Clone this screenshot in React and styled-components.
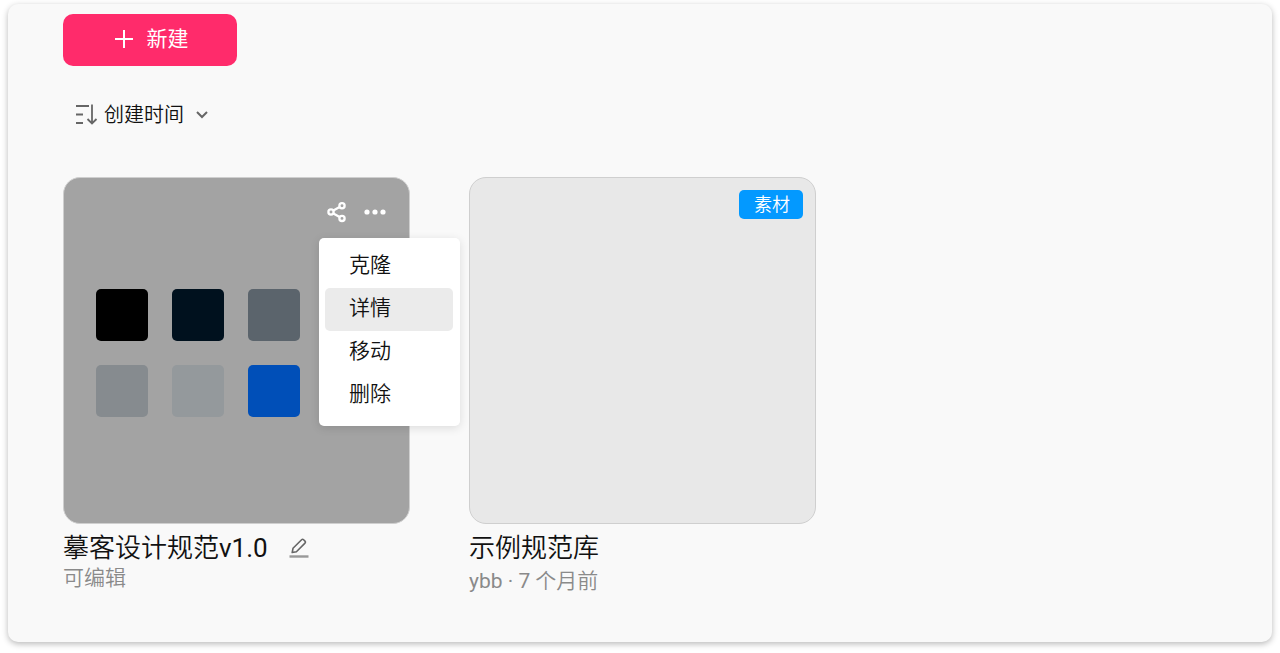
import styled, { createGlobalStyle } from "styled-components";
import { useState } from "react";

const GlobalStyle = createGlobalStyle`
  * {
    box-sizing: border-box;
  }

  body {
    margin: 0;
    background: #fff;
    color: #111;
    font-family: Roboto, "Noto Sans CJK SC", sans-serif;
    font-weight: 350;
  }

  button {
    font: inherit;
    color: inherit;
    border: none;
    padding: 0;
    background: none;
    cursor: pointer;
  }
`;

const Panel = styled.main`
  margin: 4px 8px 10px;
  padding: 10px 55px 46px;
  background: #f9f9f9;
  border-radius: 10px;
  box-shadow: 0 2px 6px rgba(0, 0, 0, 0.28);
`;

const CreateButton = styled.button`
  display: flex;
  align-items: center;
  justify-content: center;
  gap: 13px;
  width: 174px;
  height: 52px;
  padding: 0 0 2px 2px;
  border-radius: 10px;
  background: #ff2b6b;
  color: #fff;
  font-size: 21px;
  font-weight: 400;
  line-height: 30px;
`;

const SortButton = styled.button`
  display: flex;
  align-items: center;
  margin: 34px 0 0 12px;
  font-size: 20px;
  line-height: 30px;

  svg:first-child {
    margin-right: 6px;
  }

  svg:last-child {
    margin-left: 11px;
  }
`;

const Grid = styled.section`
  display: flex;
  flex-wrap: wrap;
  gap: 59px;
  margin-top: 47px;
`;

const Item = styled.article`
  width: 347px;
`;

const Cover = styled.div`
  position: relative;
  height: 347px;
  border: 1px solid #cfcfcf;
  border-radius: 17px;
  background: ${(props) => (props.$active ? "#a3a3a3" : "#e8e8e8")};
`;

const Swatches = styled.div`
  display: grid;
  grid-template-columns: repeat(3, 52px);
  gap: 24px;
  padding: 111px 0 0 32px;
`;

const Swatch = styled.div`
  height: 52px;
  border-radius: 5px;
  background: ${(props) => props.$color};
`;

const Actions = styled.div`
  position: absolute;
  top: 23px;
  right: 22px;
  display: flex;
  align-items: center;
  gap: 16px;
  color: #fff;
`;

const IconButton = styled.button`
  display: flex;
`;

const Menu = styled.ul`
  position: absolute;
  top: 60px;
  left: 255px;
  z-index: 1;
  width: 141px;
  margin: 0;
  padding: 7px 7px 9px 6px;
  list-style: none;
  background: #fff;
  border-radius: 5px;
  box-shadow: 0 2px 10px rgba(0, 0, 0, 0.12);
`;

const MenuItem = styled.button`
  display: block;
  width: 100%;
  height: 43px;
  padding: 0 0 4px 24px;
  border-radius: 5px;
  background: ${(props) => (props.$active ? "#ebebeb" : "none")};
  font-size: 21px;
  line-height: 30px;
  text-align: left;
`;

const Badge = styled.span`
  position: absolute;
  top: 12px;
  right: 12px;
  width: 64px;
  height: 29px;
  padding-left: 2px;
  border-radius: 5px;
  background: #0399ff;
  color: #fff;
  font-size: 18px;
  line-height: 29px;
  text-align: center;
`;

const TitleRow = styled.div`
  display: flex;
  align-items: center;
  gap: 21px;
  margin-top: 6px;
`;

const Title = styled.h2`
  margin: 0;
  font-size: 26px;
  font-weight: 350;
  line-height: 36px;
`;

const Meta = styled.p`
  margin: ${(props) => (props.$tight ? "-3px" : "0")} 0 0;
  color: #8a8a8a;
  font-size: 21px;
  line-height: 30px;
`;

const Latin = styled.span`
  font-weight: 400;
`;

const PlusIcon = () => (
  <svg width="20" height="20" viewBox="0 0 20 20" fill="none" stroke="currentColor" strokeWidth="2">
    <path d="M10 1v18M1 10h18" />
  </svg>
);

const SortIcon = () => (
  <svg width="23" height="22" viewBox="0 0 23 22" fill="none" stroke="#666" strokeWidth="1.8">
    <path d="M1 2h13M1 10.5h7M1 19h7M17 0.5v19M12.5 15l4.5 4.5 4.5-4.5" />
  </svg>
);

const ChevronIcon = () => (
  <svg width="14" height="10" viewBox="0 0 14 10" fill="none" stroke="#666" strokeWidth="2">
    <path d="M2 2l5 5 5-5" />
  </svg>
);

const ShareIcon = () => (
  <svg width="20" height="22" viewBox="0 0 20 22" fill="none" stroke="currentColor" strokeWidth="2.3">
    <circle cx="4" cy="11" r="2.6" />
    <circle cx="15" cy="4.8" r="2.6" />
    <circle cx="15" cy="17.4" r="2.6" />
    <path d="M6.4 9.6l6.2-3.5M6.4 12.4l6.2 3.6" />
  </svg>
);

const MoreIcon = () => (
  <svg width="24" height="22" viewBox="0 0 24 22" fill="currentColor">
    <circle cx="4" cy="11" r="2.6" />
    <circle cx="12" cy="11" r="2.6" />
    <circle cx="20" cy="11" r="2.6" />
  </svg>
);

const EditIcon = () => (
  <svg width="20" height="22" viewBox="0 0 20 22" fill="none">
    <path
      d="M3.2 15.5l.8-4.2 8.6-8.6q1-1 2 0l1.4 1.4q1 1 0 2L7.4 14.7z"
      stroke="#666"
      strokeWidth="1.6"
      strokeLinejoin="round"
    />
    <path d="M0.5 19.5h19" stroke="#999" strokeWidth="2.4" />
  </svg>
);

const colors = ["#000000", "#00111e", "#5b646c", "#868b8f", "#94999c", "#004fb8"];
const menuItems = ["克隆", "详情", "移动", "删除"];

const App = () => {
  const [hovered, setHovered] = useState("详情");

  return (
    <>
      <GlobalStyle />
      <Panel>
        <CreateButton>
          <PlusIcon />
          新建
        </CreateButton>
        <SortButton>
          <SortIcon />
          创建时间
          <ChevronIcon />
        </SortButton>
        <Grid>
          <Item>
            <Cover $active>
              <Swatches>
                {colors.map((color) => (
                  <Swatch key={color} $color={color} />
                ))}
              </Swatches>
              <Actions>
                <IconButton aria-label="分享">
                  <ShareIcon />
                </IconButton>
                <IconButton aria-label="更多">
                  <MoreIcon />
                </IconButton>
              </Actions>
              <Menu>
                {menuItems.map((item) => (
                  <li key={item}>
                    <MenuItem
                      $active={item === hovered}
                      onMouseEnter={() => setHovered(item)}
                    >
                      {item}
                    </MenuItem>
                  </li>
                ))}
              </Menu>
            </Cover>
            <TitleRow>
              <Title>
                摹客设计规范<Latin>v1.0</Latin>
              </Title>
              <IconButton aria-label="编辑">
                <EditIcon />
              </IconButton>
            </TitleRow>
            <Meta $tight>可编辑</Meta>
          </Item>
          <Item>
            <Cover>
              <Badge>素材</Badge>
            </Cover>
            <TitleRow>
              <Title>示例规范库</Title>
            </TitleRow>
            <Meta>
              <Latin>ybb · 7</Latin> 个月前
            </Meta>
          </Item>
        </Grid>
      </Panel>
    </>
  );
};

export default App;
